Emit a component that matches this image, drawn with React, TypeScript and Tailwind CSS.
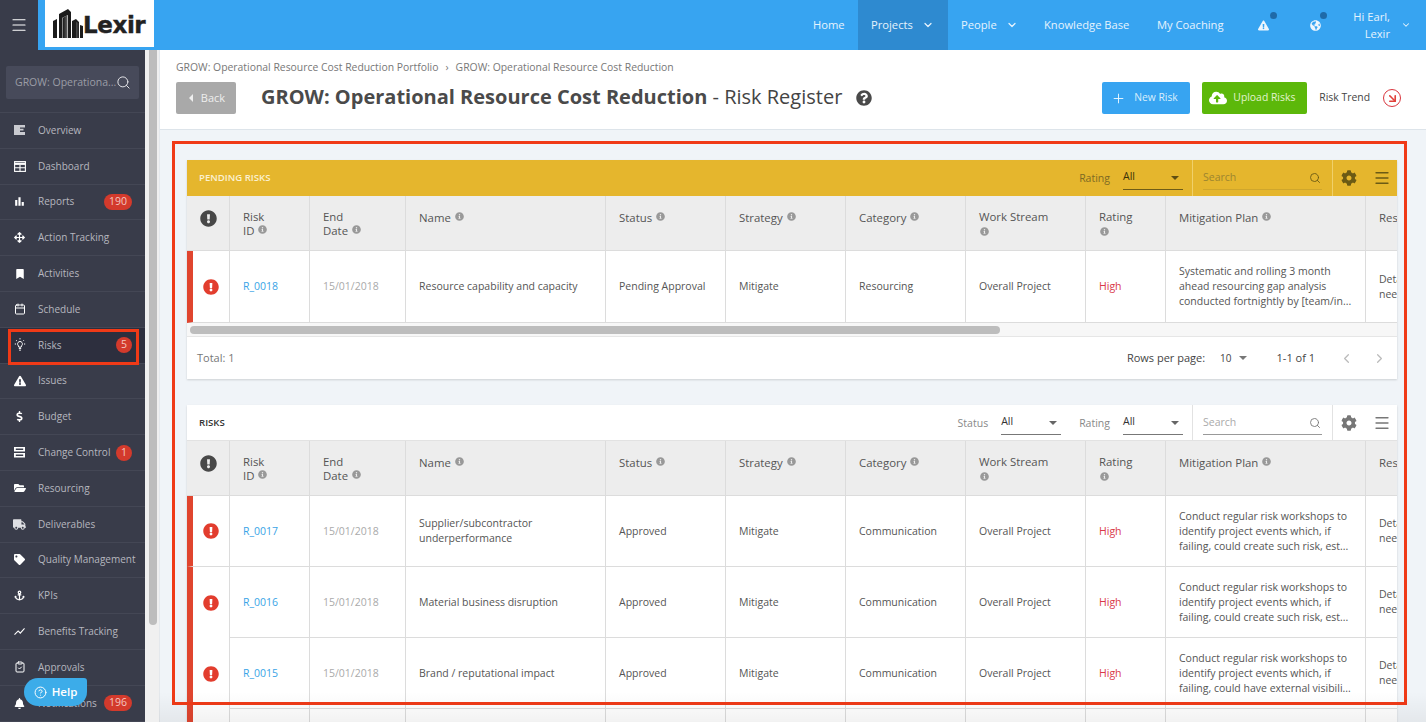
import React from "react";
import { FaBookmark, FaExclamationTriangle, FaDollarSign, FaFolderOpen, FaTruck, FaTag, FaAnchor, FaBell, FaGlobeAmericas, FaCloudUploadAlt, FaQuestionCircle, FaCog, FaExclamationCircle, FaInfoCircle, FaArrowsAlt } from "react-icons/fa";
import { MdBarChart, MdShowChart } from "react-icons/md";
import { Search, Menu, ChevronDown, ChevronLeft, ChevronRight, Plus, Calendar, ClipboardCheck, CircleHelp, ArrowDownRight } from "lucide-react";

const font = { fontFamily: '"Open Sans", "Noto Sans", sans-serif' };

function OverviewIcon() {
  return (
    <svg width="11" height="10" viewBox="0 0 11 10" fill="#c9cad0">
      <path d="M0 0h11v2.4H6v1.4h3.5v1.6H6v1.6h5V10H0z" />
    </svg>
  );
}
function DashIcon() {
  return (
    <svg width="12" height="11" viewBox="0 0 12 11" fill="none" stroke="#fff" strokeWidth="1.1">
      <rect x="0.6" y="0.6" width="10.8" height="9.8" />
      <path d="M0.6 2.8h10.8" strokeWidth="2.2" />
      <path d="M0.6 6.7h10.8M6 4v6.4" />
    </svg>
  );
}
function BulbIcon() {
  return (
    <svg width="14" height="14" viewBox="0 0 14 14" fill="none" stroke="#fff" strokeWidth="1">
      <path d="M4.7 6.6a2.4 2.4 0 1 1 4.6 0c-.3.9-1.1 1.5-1.2 2.6H5.9c-.1-1.1-.9-1.7-1.2-2.6z" />
      <path d="M5.8 10.6h2.4M6.2 12.2h1.6M7 .2v1.2M1.8 6h1.2M11 6h1.2M3.2 2.3l.8.8M10.8 2.3l-.8.8" />
    </svg>
  );
}
function ServerIcon() {
  return (
    <svg width="11" height="11" viewBox="0 0 11 11" fill="#fff" fillRule="evenodd">
      <path d="M0 0h11v4.5H0zM1.8 1.4v1.7h7.4V1.4zM0 6h11v4.5H0zM1.8 7.4v1.7h7.4V7.4z" />
    </svg>
  );
}

const items: [string, React.ReactNode, string?, boolean?][] = [
  ["Overview", <OverviewIcon />],
  ["Dashboard", <DashIcon />],
  ["Reports", <MdBarChart size={13} color="#fff" />, "190"],
  ["Action Tracking", <FaArrowsAlt size={11} color="#fff" />],
  ["Activities", <FaBookmark size={10} color="#fff" />],
  ["Schedule", <Calendar size={12} color="#fff" />],
  ["Risks", <BulbIcon />, "5", true],
  ["Issues", <FaExclamationTriangle size={12} color="#fff" />],
  ["Budget", <FaDollarSign size={11} color="#fff" />],
  ["Change Control", <ServerIcon />, "1"],
  ["Resourcing", <FaFolderOpen size={12} color="#fff" />],
  ["Deliverables", <FaTruck size={13} color="#dfe0e4" />],
  ["Quality Management", <FaTag size={11} color="#fff" />],
  ["KPIs", <FaAnchor size={11} color="#fff" />],
  ["Benefits Tracking", <MdShowChart size={13} color="#fff" />],
  ["Approvals", <ClipboardCheck size={12} color="#fff" />],
  ["Notifications", <FaBell size={11} color="#fff" />, "196"],
];

function Sidebar() {
  return (
    <aside className="w-[145px] shrink-0 bg-[#393c4a]">
      <div className="h-[63px] border-b border-[#444755] px-[6px] pt-[16px]">
        <div className="flex h-[33px] items-center justify-between rounded-[2px] bg-[#474a5a] pl-[9px] pr-[9px] text-[10.5px] text-[#9b9da6]">
          <span className="whitespace-nowrap">GROW: Operationa...</span>
          <Search size={15} color="#e4e4e8" strokeWidth={1.6} className="shrink-0" />
        </div>
      </div>
      {items.map(([label, icon, badge, active]) => (
        <div
          key={label}
          className={`flex h-[35.8px] items-center border-b border-[#444755] text-[10px] text-[#b6b7bf] ${active ? "bg-[#2d2f3e]" : ""}`}
        >
          <span className="flex w-[38px] shrink-0 justify-center pl-[1px]">{icon}</span>
          <span className="whitespace-nowrap">{label}</span>
          {badge && (
            <span
              className={`ml-auto mr-[13px] flex h-[16px] items-center justify-center rounded-full bg-[#d33a2c] text-[10.5px] text-[#f3c6c0] ${badge.length > 1 ? "w-[28px]" : "w-[16px]"}`}
            >
              {badge}
            </span>
          )}
        </div>
      ))}
    </aside>
  );
}

function Logo() {
  return (
    <div className="ml-[7px] flex h-[47px] w-[109px] items-center bg-white pl-[7px]">
      <svg width="32" height="32" viewBox="0 0 32 32" className="shrink-0">
        <defs>
          <linearGradient id="tw" x1="0" y1="0" x2="1" y2="0">
            <stop offset="0" stopColor="#111" />
            <stop offset="0.5" stopColor="#999" />
            <stop offset="1" stopColor="#222" />
          </linearGradient>
        </defs>
        <path d="M1 30V13l4-2v19zM7 30V6l9-5 3 3v26h-3V7l-6 3v20zM20 30V13l4-2 3 3v16zM28 30V17l3 1v12z" fill="#1c1c1c" />
        <path d="M10.5 30V10l5-3v23zM24 30V14l3 1v15z" fill="url(#tw)" />
      </svg>
      <span
        className="-ml-[1px] pt-[4px] text-[23px] font-bold leading-none text-[#222]"
        style={{ fontFamily: '"DejaVu Sans", sans-serif', letterSpacing: "-0.4px", WebkitTextStroke: "0.4px #222" }}
      >
        Lexir
      </span>
    </div>
  );
}

function NavLink({ label, w, active, chev }: { label: string; w: number; active?: boolean; chev?: boolean }) {
  return (
    <div
      className={`flex h-full items-center pl-[13px] text-[11.2px] text-[#e6f3fd] ${active ? "bg-[#2e8ad0]" : ""}`}
      style={{ width: w }}
    >
      {label}
      {chev && <ChevronDown size={12} strokeWidth={2.5} className="ml-[9px]" />}
    </div>
  );
}

function TopBar() {
  return (
    <header className="flex h-[50px] shrink-0">
      <div className="flex w-[38px] shrink-0 items-center justify-center bg-[#393c4a]">
        <Menu size={18} color="#fff" strokeWidth={1.6} />
      </div>
      <div className="flex flex-1 items-start bg-[#37a4f1]">
        <Logo />
        <nav className="ml-auto flex h-full items-center text-white">
          <NavLink label="Home" w={58} />
          <NavLink label="Projects" w={90} active chev />
          <NavLink label="People" w={83} chev />
          <NavLink label="Knowledge Base" w={113} />
          <NavLink label="My Coaching" w={93} />
          <div className="relative flex h-full w-[53px] items-center justify-center">
            <FaExclamationTriangle size={11} color="#eef6fd" />
            <span className="absolute left-[33px] top-[12px] h-[7px] w-[7px] rounded-full bg-[#1f6aa8]" />
          </div>
          <div className="relative flex h-full w-[50px] items-center justify-center">
            <FaGlobeAmericas size={11} color="#eef6fd" />
            <span className="absolute left-[30px] top-[12px] h-[7px] w-[7px] rounded-full bg-[#1f6aa8]" />
          </div>
          <div className="flex h-full w-[86px] items-center justify-end pr-[15px] text-right text-[11.2px] leading-[17px] text-[#e6f3fd]">
            <span>Hi Earl,<br />Lexir</span>
            <ChevronDown size={10} strokeWidth={2.5} className="ml-[11px]" />
          </div>
        </nav>
      </div>
    </header>
  );
}

function PageHead() {
  return (
    <div className="h-[80px] shrink-0 border-b border-[#dde4ea] bg-white pl-[16px] pr-[25px] pt-[11px]">
      <div className="flex items-center text-[10.4px] leading-[12px] text-[#777]">
        GROW: Operational Resource Cost Reduction Portfolio
        <span className="mx-[7px]">›</span>
        GROW: Operational Resource Cost Reduction
      </div>
      <div className="mt-[9px] flex h-[32px] items-center">
        <div className="flex h-full w-[60px] items-center justify-center gap-[8px] rounded-[2px] bg-[#a9a9a9] pl-[2px] text-[11px] text-[#eee]">
          <span className="h-0 w-0 border-y-[4px] border-r-[4px] border-y-transparent border-r-[#eee]" />
          Back
        </div>
        <h1 className="ml-[25px] -translate-y-[1px] text-[20px] font-bold leading-none text-[#4a4a4a]">
          GROW: Operational Resource Cost Reduction
          <span className="font-normal text-[#444]"> - Risk Register</span>
        </h1>
        <FaQuestionCircle size={16} color="#4a4a4a" className="ml-[14px]" />
        <div className="ml-auto flex h-full w-[88px] items-center justify-start gap-[8px] rounded-[2px] bg-[#37a4f1] pl-[9px] text-[10.3px] text-[#d9eefc]">
          <Plus size={15} strokeWidth={1.5} color="#eaf6fe" />
          New Risk
        </div>
        <div className="ml-[12px] flex h-full w-[105px] items-center justify-start gap-[6px] rounded-[2px] bg-[#5cb80a] pl-[7px] text-[10.4px] text-[#e2f3cf]">
          <FaCloudUploadAlt size={18} color="#fff" />
          Upload Risks
        </div>
        <span className="ml-[12px] text-[10.4px] text-[#444]">Risk Trend</span>
        <span className="ml-[13px] flex h-[18px] w-[18px] items-center justify-center rounded-full border-[1.5px] border-[#d9363e]">
          <ArrowDownRight size={13} strokeWidth={3} color="#e0403a" />
        </span>
      </div>
    </div>
  );
}

const Info = ({ block }: { block?: boolean }) => (
  <FaInfoCircle size={9} color="#999" className={block ? "mt-[3px] ml-[1px] block" : "ml-[4px] inline -translate-y-[2px]"} />
);

const widths = [43, 80, 96, 200, 120, 120, 120, 120, 80, 200, 59];

function HeadCell({ children, last }: { children: React.ReactNode; last?: boolean }) {
  return (
    <th className={`h-[55px] border-b border-[#dcdcdc] bg-[#ededed] px-[13px] pt-[14px] align-top text-left text-[11.4px] font-medium leading-[14px] text-[#555] ${last ? "" : "border-r"}`}>
      {children}
    </th>
  );
}

type Row = { id: string; name: React.ReactNode; status: string; cat: string; plan: React.ReactNode; noAlertBorder?: boolean; h: number };

function Cell({ children, color = "text-[#555]", last }: { children?: React.ReactNode; color?: string; last?: boolean }) {
  return (
    <td className={`overflow-hidden border-b border-[#dcdcdc] bg-white px-[13px] align-middle text-[10.5px] leading-[15px] ${color} ${last ? "whitespace-nowrap" : "border-r"}`}>
      {children}
    </td>
  );
}

function RiskTable({ rows }: { rows: Row[] }) {
  return (
    <div className="overflow-hidden">
      <table className="w-[1238px] table-fixed border-separate border-spacing-0" style={font}>
        <colgroup>
          {widths.map((w, i) => (
            <col key={i} style={{ width: w }} />
          ))}
        </colgroup>
        <thead>
          <tr>
            <th className="h-[55px] border-b border-r border-[#dcdcdc] bg-[#ededed] pt-[14px] align-top">
              <FaExclamationCircle size={17} color="#484848" className="mx-auto" />
            </th>
            <HeadCell>Risk<br />ID<Info /></HeadCell>
            <HeadCell>End<br />Date<Info /></HeadCell>
            <HeadCell><span className="inline-block pt-[1px]">Name</span><Info /></HeadCell>
            <HeadCell><span className="inline-block pt-[1px]">Status</span><Info /></HeadCell>
            <HeadCell><span className="inline-block pt-[1px]">Strategy</span><Info /></HeadCell>
            <HeadCell><span className="inline-block pt-[1px]">Category</span><Info /></HeadCell>
            <HeadCell>Work Stream<Info block /></HeadCell>
            <HeadCell>Rating<Info block /></HeadCell>
            <HeadCell><span className="inline-block pt-[1px]">Mitigation Plan</span><Info /></HeadCell>
            <HeadCell last><span className="inline-block pt-[1px]">Resp</span></HeadCell>
          </tr>
        </thead>
        <tbody>
          {rows.map((r) => (
            <tr key={r.id} style={{ height: r.h }}>
              <td className={`border-l-[6px] border-r border-l-[#e0452f] border-r-[#dcdcdc] bg-white pr-[1px] ${r.noAlertBorder ? "" : "border-b border-b-[#dcdcdc]"}`}>
                <FaExclamationCircle size={16} color="#e23d2e" className="mx-auto" />
              </td>
              <Cell color="text-[#3aa4e6]">{r.id}</Cell>
              <Cell color="text-[#aaa]">15/01/2018</Cell>
              <Cell>{r.name}</Cell>
              <Cell>{r.status}</Cell>
              <Cell>Mitigate</Cell>
              <Cell>{r.cat}</Cell>
              <Cell>Overall Project</Cell>
              <Cell color="text-[#d9394a]">High</Cell>
              <Cell>{r.plan}</Cell>
              <Cell last>Details<br />needed</Cell>
            </tr>
          ))}
        </tbody>
      </table>
    </div>
  );
}

function Select({ label, gold }: { label: string; gold?: boolean }) {
  return (
    <div className="ml-[13px] flex items-center pt-[1px]">
      <span className={`mr-[13px] text-[10.5px] ${gold ? "text-[#7d6a24]" : "text-[#888]"}`}>{label}</span>
      <div className={`flex h-[22px] w-[60px] items-center justify-between border-b pr-[4px] text-[10.5px] ${gold ? "border-[#6f5c16] text-[#3a3208]" : "border-[#777] text-[#333]"}`}>
        <span className="-translate-y-[1px]">All</span>
        <span className={`h-0 w-0 border-x-[4.5px] border-t-[4.5px] border-x-transparent ${gold ? "border-t-[#5f4e12]" : "border-t-[#666]"}`} />
      </div>
    </div>
  );
}

function Toolbar({ title, gold, status }: { title: string; gold?: boolean; status?: boolean }) {
  const sep = gold ? "border-[#f0d06a]" : "border-[#e2e2e2]";
  const ic = gold ? "#6b5a14" : "#777";
  return (
    <div className={`flex h-[36px] items-stretch ${gold ? "bg-[#e5b62d]" : "bg-white shadow-[inset_0_-1px_0_#e2e2e2]"}`}>
      <div className={`flex items-center pl-[12px] text-[9.6px] font-semibold ${gold ? "text-[#fbf1d0]" : "text-[#333]"}`}>{title}</div>
      <div className="ml-auto flex items-center pr-[9px]">
        {status && <Select label="Status" />}
        {status ? <span className="w-[5px]" /> : null}
        <Select label="Rating" gold={gold} />
      </div>
      <div className={`flex w-[140px] items-center border-l px-[10px] pt-[1px] ${sep}`}>
        <div className={`flex h-[22px] w-full items-center justify-between border-b text-[10.5px] ${gold ? "border-[#cfa62c] text-[#9c8530]" : "border-[#999] text-[#aaa]"}`}>
          Search
          <Search size={12} color={ic} strokeWidth={1.8} className="mr-[1px]" />
        </div>
      </div>
      <div className={`flex w-[65px] items-center justify-between border-l pl-[8px] pr-[6px] ${sep}`}>
        <FaCog size={16} color={ic} />
        <Menu size={18} color={ic} strokeWidth={1.7} />
      </div>
    </div>
  );
}

const conduct = "Conduct regular risk workshops to identify project events which, if failing, could create such risk, est...";

export default function App() {
  return (
    <div className="relative flex h-[722px] w-full flex-col overflow-hidden bg-[#f0f4f8]" style={font}>
      <TopBar />
      <div className="flex min-h-0 flex-1">
        <div className="shrink-0 overflow-hidden">
          <Sidebar />
        </div>
        <div className="w-[14px] shrink-0 bg-[#f0f0f0] pl-[4px]">
          <div className="h-[575px] w-[8px] rounded-b-[4px] bg-[#bdbdbd]" />
        </div>
        <main className="min-w-0 flex-1 border-l border-[#e4e8ec]">
          <PageHead />
          <div className="pl-[27px] pr-[29px] pt-[30px]">
            <section className="bg-white shadow-[0_1px_2px_rgba(0,0,0,0.15)]">
              <Toolbar title="PENDING RISKS" gold />
              <RiskTable
                rows={[
                  {
                    id: "R_0018",
                    name: "Resource capability and capacity",
                    status: "Pending Approval",
                    cat: "Resourcing",
                    plan: "Systematic and rolling 3 month ahead resourcing gap analysis conducted fortnightly by [team/in...",
                    h: 72,
                  },
                ]}
              />
              <div className="h-[14px] border-b border-[#e6e6e6] bg-[#f7f7f7] px-[3px] pt-[3px]">
                <div className="h-[8px] w-[810px] rounded-full bg-[#bdbdbd]" />
              </div>
              <div className="flex h-[42px] items-center pl-[10px] pr-[10px] text-[11px] text-[#777]">
                Total: 1
                <span className="ml-auto text-[#444]">Rows per page:</span>
                <span className="ml-[15px] text-[10px] text-[#444]">10</span>
                <span className="ml-[7px] h-0 w-0 border-x-[4px] border-t-[4px] border-x-transparent border-t-[#777]" />
                <span className="ml-[30px] text-[#444]">1-1 of 1</span>
                <ChevronLeft size={15} color="#bbb" className="ml-[24px]" />
                <ChevronRight size={15} color="#bbb" className="ml-[18px]" />
              </div>
            </section>
            <section className="mt-[26px] bg-white shadow-[0_1px_2px_rgba(0,0,0,0.15)]">
              <Toolbar title="RISKS" status />
              <RiskTable
                rows={[
                  { id: "R_0017", name: <>Supplier/subcontractor<br />underperformance</>, status: "Approved", cat: "Communication", plan: conduct, h: 71 },
                  { id: "R_0016", name: "Material business disruption", status: "Approved", cat: "Communication", plan: conduct, noAlertBorder: true, h: 71 },
                  { id: "R_0015", name: "Brand / reputational impact", status: "Approved", cat: "Communication", plan: "Conduct regular risk workshops to identify project events which, if failing, could have external visibili...", noAlertBorder: true, h: 71 },
                  { id: "R_0014", name: "", status: "", cat: "", plan: "", h: 71 },
                ]}
              />
            </section>
          </div>
        </main>
      </div>

      {/* annotation boxes and floating help */}
      <div className="pointer-events-none absolute left-[172px] top-[141px] h-[564px] w-[1235px] border-[3px] border-[#f03a17]" />
      <div className="pointer-events-none absolute left-[8px] top-[329px] h-[36px] w-[131px] border-[3px] border-[#f03a17]" />
      <div className="pointer-events-none absolute bottom-0 left-[159px] right-0 h-[30px] bg-gradient-to-b from-transparent to-[#0000000d]" />
      <div className="absolute left-[24px] top-[678px] flex h-[28px] w-[63px] items-center justify-center gap-[5px] rounded-[14px] rounded-tr-[3px] bg-[#3cace9] text-[11.5px] font-semibold text-white">
        <CircleHelp size={13} strokeWidth={1.8} />
        Help
      </div>
    </div>
  );
}
